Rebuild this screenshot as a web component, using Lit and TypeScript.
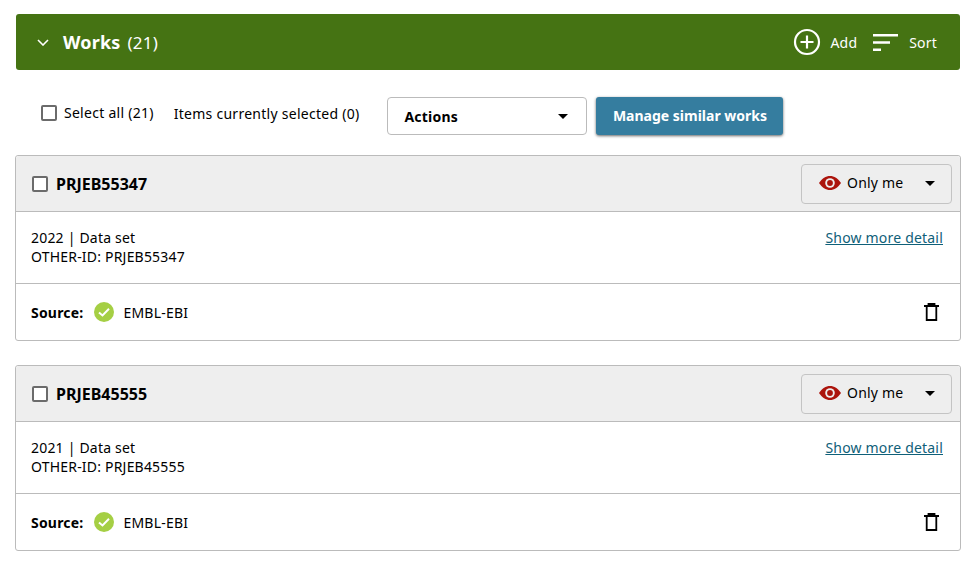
import { LitElement, css, html } from "lit";
import { customElement } from "lit/decorators.js";

const works = [
  { id: "PRJEB55347", year: "2022" },
  { id: "PRJEB45555", year: "2021" },
];

const caret = html`<svg class="caret" width="10" height="5" viewBox="0 0 10 5"><path d="M0 0h10L5 5z" fill="#000" /></svg>`;

@customElement("app-root")
export class AppRoot extends LitElement {
  static styles = css`
    :host {
      display: block;
      padding: 14px 10px 0 15px;
      font-family: "Noto Sans", sans-serif;
      font-size: 14px;
      letter-spacing: 0.2px;
      color: #000;
    }
    .bar {
      display: flex;
      align-items: center;
      height: 56px;
      margin-left: 1px;
      margin-right: 1px;
      padding: 0 23px 0 21px;
      background: #457313;
      border-radius: 3px;
      color: #fff;
    }
    .bar .chev {
      margin-right: 14px;
    }
    .title {
      font-size: 18px;
      font-weight: 700;
      margin-right: 7px;
    }
    .count {
      font-size: 17px;
    }
    .tools {
      margin-left: auto;
      display: flex;
      align-items: center;
      font-size: 14px;
    }
    .tools svg {
      display: block;
    }
    .add-label {
      margin: 0 16px 0 9px;
    }
    .sort-label {
      margin-left: 11px;
    }
    .toolbar {
      display: flex;
      align-items: center;
      height: 38px;
      margin: 27px 0 20px;
      padding-left: 26px;
    }
    .box {
      display: block;
      box-sizing: border-box;
      width: 16px;
      height: 16px;
      border: 2px solid #6b6b6b;
      border-radius: 2px;
      background: #fff;
      flex: none;
    }
    .select-all {
      display: flex;
      align-items: center;
      gap: 7px;
      margin-top: -7px;
      letter-spacing: 0.27px;
    }
    .selected {
      margin-left: 20px;
      margin-top: -5px;
      letter-spacing: 0.27px;
    }
    .actions {
      box-sizing: border-box;
      display: flex;
      align-items: center;
      justify-content: space-between;
      width: 200px;
      height: 38px;
      margin-left: 28px;
      padding: 0 18px 0 16px;
      border: 1px solid #bbb;
      border-radius: 4px;
      font-weight: 700;
    }
    .manage {
      display: flex;
      align-items: center;
      justify-content: center;
      width: 187px;
      height: 38px;
      margin-left: 9px;
      padding-bottom: 2px;
      box-sizing: border-box;
      background: #357d9f;
      border-radius: 3px;
      box-shadow: 0 1px 3px rgb(0 0 0 / 0.6);
      color: #fff;
      font-weight: 700;
      letter-spacing: 0;
    }
    .card {
      border: 1px solid #bbb;
      border-radius: 3px;
      margin-bottom: 24px;
    }
    .head {
      box-sizing: border-box;
      display: flex;
      align-items: center;
      height: 56px;
      padding: 0 8px 0 16px;
      background: #eee;
      border-bottom: 1px solid #bbb;
      border-radius: 3px 3px 0 0;
    }
    .head .box {
      margin-right: 8px;
    }
    .name {
      font-size: 16px;
      font-weight: 700;
      letter-spacing: 0;
    }
    .vis {
      box-sizing: border-box;
      display: flex;
      align-items: center;
      width: 151px;
      height: 40px;
      margin-left: auto;
      padding: 0 16px 0 17px;
      border: 1px solid #c4c4c4;
      border-radius: 4px;
    }
    .vis .eye {
      margin-top: -2px;
    }
    .vis span {
      margin-left: 6px;
      padding-bottom: 2px;
    }
    .vis .caret {
      margin-left: auto;
    }
    .body {
      display: flex;
      justify-content: space-between;
      height: 72px;
      padding: 16px 17px 0 15px;
      box-sizing: border-box;
      border-bottom: 1px solid #bbb;
      line-height: 19px;
    }
    .body a {
      color: #0f6079;
      text-decoration: underline;
    }
    .foot {
      display: flex;
      align-items: center;
      height: 56px;
      padding: 0 21px 0 15px;
    }
    .foot b {
      margin-right: 11px;
    }
    .foot svg.ok {
      margin-right: 9px;
    }
    .foot .bin {
      margin-left: auto;
    }
  `;

  renderCard(w: { id: string; year: string }) {
    return html`
      <div class="card">
        <div class="head">
          <span class="box"></span>
          <span class="name">${w.id}</span>
          <div class="vis">
            <svg class="eye" width="22" height="14" viewBox="0 0 22 14">
              <path d="M0 7C3 2.5 6.8 0 11 0s8 2.500 11 7c-3 4.500-6.800 7-11 7S3 11.500 0 7z" fill="#ac140c" />
              <circle cx="11" cy="7" r="4.800" fill="#eee" />
              <circle cx="11" cy="7" r="2.900" fill="#ac140c" />
            </svg>
            <span>Only me</span>
            ${caret}
          </div>
        </div>
        <div class="body">
          <div>${w.year} | Data set<br />OTHER-ID: ${w.id}</div>
          <a href="#">Show more detail</a>
        </div>
        <div class="foot">
          <b>Source:</b>
          <svg class="ok" width="20" height="20" viewBox="0 0 20 20">
            <circle cx="10" cy="10" r="10" fill="#a5cf44" />
            <path d="M5 10.500l3.500 3L15 6.800" fill="none" stroke="#fff" stroke-width="2" />
          </svg>
          <span>EMBL-EBI</span>
          <svg class="bin" width="15" height="18" viewBox="0 0 15 18">
            <path d="M0 3h15M4.500 3V1h6v2M2.700 3v14h9.600V3" fill="none" stroke="#000" stroke-width="1.800" />
          </svg>
        </div>
      </div>
    `;
  }

  render() {
    return html`
      <div class="bar">
        <svg class="chev" width="12" height="7" viewBox="0 0 12 7">
          <path d="M1 1l5 5 5-5" fill="none" stroke="#fff" stroke-width="1.600" />
        </svg>
        <span class="title">Works</span>
        <span class="count">(21)</span>
        <div class="tools">
          <svg width="28" height="28" viewBox="0 0 28 28">
            <circle cx="14" cy="14" r="12" fill="none" stroke="#fff" stroke-width="2.200" />
            <path d="M14 7.500v13M7.500 14h13" stroke="#fff" stroke-width="2.200" />
          </svg>
          <span class="add-label">Add</span>
          <svg width="25" height="17" viewBox="0 0 25 17">
            <path d="M0 1.200h25M0 8.500h17M0 15.800h8" stroke="#fff" stroke-width="2.400" />
          </svg>
          <span class="sort-label">Sort</span>
        </div>
      </div>
      <div class="toolbar">
        <label class="select-all"><span class="box"></span>Select all (21)</label>
        <span class="selected">Items currently selected (0)</span>
        <div class="actions">Actions ${caret}</div>
        <div class="manage">Manage similar works</div>
      </div>
      ${works.map((w) => this.renderCard(w))}
    `;
  }
}
